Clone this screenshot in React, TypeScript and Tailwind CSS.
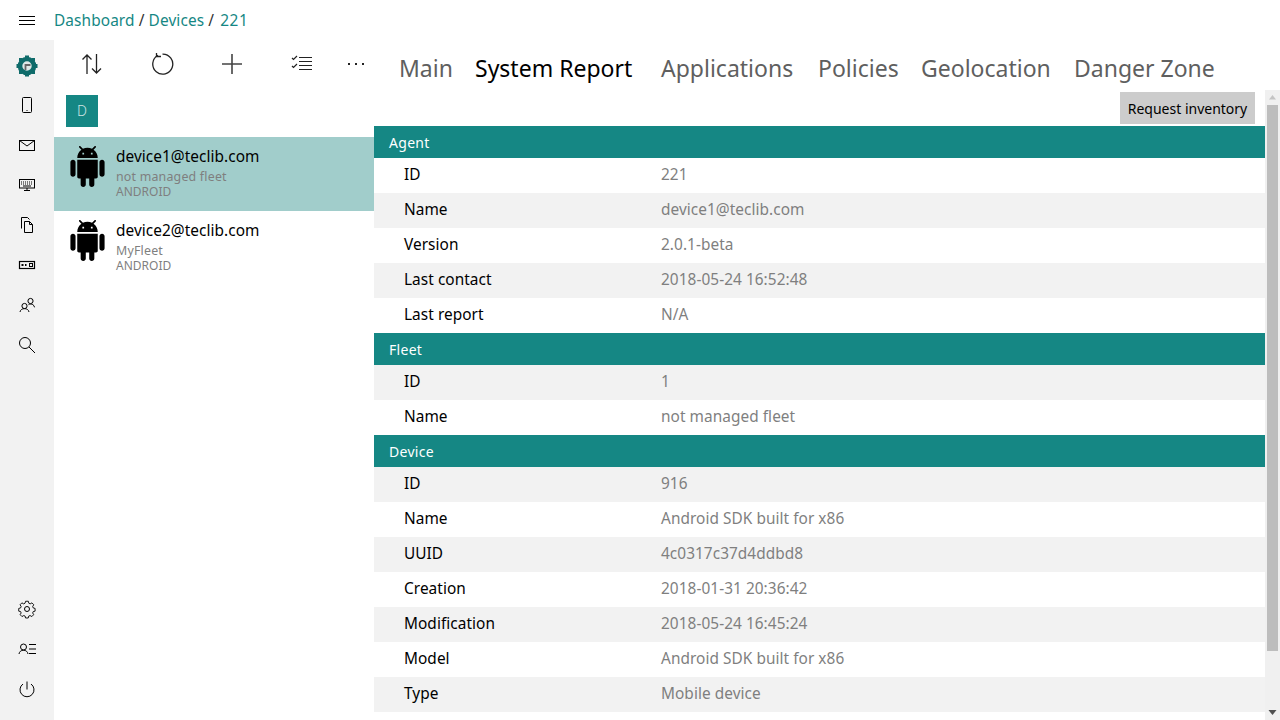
import React from 'react';

const teal = 'bg-[#158784]';

const android =
  'M6 18c0 .55.45 1 1 1h1v3.5c0 .83.67 1.5 1.5 1.5s1.5-.67 1.5-1.5V19h2v3.5c0 .83.67 1.5 1.5 1.5s1.5-.67 1.5-1.5V19h1c.55 0 1-.45 1-1V8H6v10zM3.5 8C2.67 8 2 8.67 2 9.5v7c0 .83.67 1.5 1.5 1.5S5 17.33 5 16.5v-7C5 8.67 4.33 8 3.5 8zm17 0c-.83 0-1.5.67-1.5 1.5v7c0 .83.67 1.5 1.5 1.5s1.5-.67 1.5-1.5v-7c0-.83-.67-1.5-1.5-1.5zm-4.97-5.84l1.3-1.3c.2-.2.2-.51 0-.71-.2-.2-.51-.2-.71 0l-1.48 1.48C13.85 1.23 12.95 1 12 1c-.96 0-1.86.23-2.66.63L7.85.15c-.2-.2-.51-.2-.71 0-.2.2-.2.51 0 .71l1.31 1.31C6.97 3.26 6 5.01 6 7h12c0-1.99-.97-3.75-2.47-4.84zM10 5H9V4h1v1zm5 0h-1V4h1v1z';

// thin outline icon, 20x20 box
const Line = ({ children, size = 20 }: { children: React.ReactNode; size?: number }) => (
  <svg width={size} height={size} viewBox="0 0 20 20" fill="none" stroke="#000" strokeWidth="1">
    {children}
  </svg>
);

const railTop = [
  <svg key="logo" width="22" height="22" viewBox="0 0 22 22">
    <circle cx="11" cy="11" r="7" fill="#dfe9e8" stroke="#0f6b6a" strokeWidth="4.6" />
    <g fill="#0f6b6a">
      <rect x="9" y="0.5" width="4" height="3" />
      <rect x="9" y="18.5" width="4" height="3" />
      <rect x="0.5" y="9" width="3" height="4" />
      <rect x="18.5" y="9" width="3" height="4" />
      <rect x="3" y="3" width="3.5" height="3.5" />
      <rect x="15.5" y="3" width="3.5" height="3.5" />
      <rect x="3" y="15.5" width="3.5" height="3.5" />
      <rect x="15.5" y="15.5" width="3.5" height="3.5" />
    </g>
    <path d="M9.500 15v-5h5" fill="none" stroke="#666" strokeWidth="1.800" />
  </svg>,
  <Line key="phone">
    <rect x="5.5" y="2.5" width="9" height="15" rx="1" />
    <path d="M9.5 15.5h1" />
  </Line>,
  <Line key="mail">
    <rect x="2.5" y="5.5" width="15" height="10" />
    <path d="M2.5 5.5 10 11l7.5-5.5" />
  </Line>,
  <Line key="keyboard">
    <rect x="2.5" y="4.5" width="15" height="8.5" />
    <path d="M4 7h12M4 9h12" strokeDasharray="1 1" />
    <path d="M6 11h8M10 13v2.5M7 15.500h6" />
  </Line>,
  <Line key="files">
    <path d="M4.5 13.5v-11h6l2 2" />
    <path d="M7.5 17.5v-11h5l3 3v8zM12.5 6.5v3h3" />
  </Line>,
  <Line key="tag">
    <rect x="2.5" y="6.5" width="15" height="7" strokeWidth="1.2" />
    <path d="M4.5 10h2M8 10h1.5" strokeWidth="2" />
    <rect x="12.5" y="8.5" width="3" height="3" />
  </Line>,
  <Line key="users">
    <circle cx="7.5" cy="11" r="2.6" />
    <path d="M3 17c.3-2 2-3.4 4.5-3.4S11.7 15 12 17" />
    <circle cx="13.5" cy="6" r="2.6" />
    <path d="M11.5 9.6c1.3-.7 3-.7 4.300 0 1 .6 1.500 1.500 1.700 2.700" />
  </Line>,
  <Line key="search">
    <circle cx="8" cy="8" r="5.500" />
    <path d="m12 12 6 6" />
  </Line>,
];

const railBottom = [
  <Line key="gear">
    <circle cx="10" cy="10" r="2.500" />
    <path d="M8.500 2.500h3l.5 2.200 1.500.7 2-1.100 2 2.100-1.200 2 .6 1.500 2.100.6v3l-2.100.5-.6 1.500 1.100 1.900-2 2.100-2-1.100-1.500.6-.5 2.100h-3l-.5-2.100-1.500-.6-2 1.100-2-2.100 1.100-1.900-.6-1.500-2.100-.5v-3l2.100-.6.6-1.500-1.200-2 2-2.100 2 1.100 1.500-.7z" transform="translate(1 0) scale(.9)" />
  </Line>,
  <Line key="profile">
    <circle cx="6.500" cy="8" r="3" />
    <path d="M2 15c.3-2.200 2-3.800 4.500-3.800S10.700 12.800 11 15M12 5.500h7M12 10h7M12 14.500h7" />
  </Line>,
  <Line key="power">
    <path d="M10 2.500v8" />
    <path d="M6 5a7 7 0 1 0 8 0" />
  </Line>,
];

const sections = [
  {
    title: 'Agent',
    rows: [
      ['ID', '221'],
      ['Name', 'device1@teclib.com'],
      ['Version', '2.0.1-beta'],
      ['Last contact', '2018-05-24 16:52:48'],
      ['Last report', 'N/A'],
    ],
    start: 0,
  },
  {
    title: 'Fleet',
    rows: [
      ['ID', '1'],
      ['Name', 'not managed fleet'],
    ],
    start: 1,
  },
  {
    title: 'Device',
    rows: [
      ['ID', '916'],
      ['Name', 'Android SDK built for x86'],
      ['UUID', '4c0317c37d4ddbd8'],
      ['Creation', '2018-01-31 20:36:42'],
      ['Modification', '2018-05-24 16:45:24'],
      ['Model', 'Android SDK built for x86'],
      ['Type', 'Mobile device'],
    ],
    start: 1,
  },
];

const devices = [
  { name: 'device1@teclib.com', fleet: 'not managed fleet', selected: true },
  { name: 'device2@teclib.com', fleet: 'MyFleet', selected: false },
];

const tabs = [
  { label: 'Main', width: 'w-[52px]' },
  { label: 'System Report', width: 'w-[162px]' },
  { label: 'Applications', width: 'w-[133px]' },
  { label: 'Policies', width: 'w-[79px]' },
  { label: 'Geolocation', width: 'w-[129px]' },
  { label: 'Danger Zone', width: 'w-[142px]' },
];

export default function App() {
  return (
    <div className="flex flex-col h-[720px] w-[1280px] overflow-hidden bg-white font-['Noto_Sans',sans-serif] text-black">
      {/* Top bar */}
      <div className="flex items-center h-10 shrink-0">
        <div className="w-[54px] flex justify-center pt-[2px]">
          <svg width="16" height="12" viewBox="0 0 16 12" stroke="#000" strokeWidth="1">
            <path d="M0 1.500h16M0 5.500h16M0 9.500h16" />
          </svg>
        </div>
        <div className="text-[15.4px] tracking-[0.1px] text-[#333] pt-[2px]">
          <span className="text-[#158784]">Dashboard</span> / <span className="text-[#158784]">Devices</span> /{' '}
          <span className="text-[#158784] ml-[2px] tracking-[0.6px]">221</span>
        </div>
      </div>

      <div className="flex flex-1 min-h-0">
        {/* Left rail */}
        <div className="w-[54px] shrink-0 bg-[#f2f2f2] flex flex-col justify-between pt-[6px] pb-[11px]">
          <div>
            {railTop.map((icon, i) => (
              <div key={i} className={`${i === 0 ? 'h-[39px]' : 'h-10 pb-[1px]'} flex items-center justify-center`}>
                {icon}
              </div>
            ))}
          </div>
          <div>
            {railBottom.map((icon, i) => (
              <div key={i} className="h-10 flex items-center justify-center">
                {icon}
              </div>
            ))}
          </div>
        </div>

        {/* Device list */}
        <div className="w-[320px] shrink-0">
          <div className="h-[48px] mb-[7px] flex items-center pl-[3px]">
            <div className="w-[70px] flex justify-center">
              <svg width="24" height="24" viewBox="0 0 24 24" fill="none" stroke="#222" strokeWidth="1.300">
                <path d="M7 22V3M2.500 7.500 7 3l4.500 4.500M16.500 2v19M12 16.500l4.500 4.500 4.500-4.500" />
              </svg>
            </div>
            <div className="w-[72px] flex justify-center">
              <svg width="24" height="24" viewBox="0 0 24 24" fill="none" stroke="#222" strokeWidth="1.300">
                <path d="M8 3.300a10 10 0 1 0 4.500-1.200" />
                <path d="M6.500 1v3.500h4.500" />
              </svg>
            </div>
            <div className="w-[70px] flex justify-center">
              <svg width="22" height="22" viewBox="0 0 22 22" stroke="#444" strokeWidth="1.600">
                <path d="M11 1v20M1 11h20" />
              </svg>
            </div>
            <div className="w-[73px] flex justify-center">
              <svg width="22" height="22" viewBox="0 0 22 22" fill="none" stroke="#222" strokeWidth="1.200">
                <path d="M8 4.500h13M8 8.500h13M8 12.500h13M8 16.500h13" />
                <path d="m1 5 1.500 1.500L6 3M1 13l1.500 1.500L6 11" />
              </svg>
            </div>
            <div className="w-[36px] flex justify-center">
              <svg width="16" height="4" viewBox="0 0 16 4" fill="#222">
                <rect x="0" y="1" width="2" height="2" />
                <rect x="7" y="1" width="2" height="2" />
                <rect x="14" y="1" width="2" height="2" />
              </svg>
            </div>
          </div>
          <div className="h-[42px] pl-3">
            <div className={`w-8 h-8 ${teal} flex items-center justify-center text-sm font-light text-[#cfe5e4]`}>D</div>
          </div>
          {devices.map(d => (
            <div key={d.name} className={`flex h-[74px] pl-[13px] pt-[9px] ${d.selected ? 'bg-[#a1cdcb]' : ''}`}>
              <svg width="41" height="41" viewBox="0 0 24 24" fill="#000" className="shrink-0">
                <path d={android} />
              </svg>
              <div className="pl-2">
                <div className="text-[15.4px] tracking-[0.05px] leading-[21px]">{d.name}</div>
                <div className="text-[12.4px] tracking-[0.2px] leading-[15px] mt-[2px] text-[#7f7f7f]">{d.fleet}</div>
                <div className="text-[12px] leading-[15px] text-[#7f7f7f]">ANDROID</div>
              </div>
            </div>
          ))}
        </div>

        {/* Content */}
        <div className="flex-1 min-w-0 flex flex-col">
          <div className="h-[50px] shrink-0 flex gap-6 pl-[25px] pt-[9px] text-[23px] leading-[38px] text-[#5f5f5f]">
            {tabs.map(t => (
              <span key={t.label} className={`${t.width} whitespace-nowrap ${t.label === 'System Report' ? 'text-black' : ''}`}>
                {t.label}
              </span>
            ))}
          </div>
          <div className="flex flex-1 min-h-0">
            <div className="flex-1 min-w-0 overflow-hidden">
              <div className="h-[36px] flex justify-end items-start pt-[2px] pr-[10px]">
                <div className="h-8 w-[135px] bg-[#cccccc] flex items-center justify-center text-sm pt-[1px]">
                  Request inventory
                </div>
              </div>
              {sections.map(s => (
                <div key={s.title}>
                  <div className={`h-8 ${teal} text-white text-sm tracking-[0.3px] flex items-center pl-[15px] pt-[2px]`}>
                    {s.title}
                  </div>
                  {s.rows.map(([label, value], i) => (
                    <div
                      key={label}
                      className={`h-[35px] flex items-center text-[15.4px] tracking-[0.05px] pb-[2px] ${
                        (i + s.start) % 2 === 1 ? 'bg-[#f2f2f2]' : 'bg-white'
                      }`}
                    >
                      <span className="w-[287px] pl-[30px] shrink-0">{label}</span>
                      <span className="text-[#7f7f7f]">{value}</span>
                    </div>
                  ))}
                </div>
              ))}
            </div>
            {/* Scrollbar */}
            <div className="w-[15px] shrink-0 bg-[#f0f0f0] flex flex-col items-center">
              <svg width="11" height="15" viewBox="0 0 11 15" fill="#c4c4c4" className="shrink-0">
                <path d="M5.500 5 9 9.500H2z" />
              </svg>
              <div className="w-[11px] h-[546px] bg-[#bdbdbd]" />
              <svg width="11" height="15" viewBox="0 0 11 15" fill="#505050" className="shrink-0 mt-auto">
                <path d="M1.500 5h8L5.500 10z" />
              </svg>
            </div>
          </div>
        </div>
      </div>
    </div>
  );
}
